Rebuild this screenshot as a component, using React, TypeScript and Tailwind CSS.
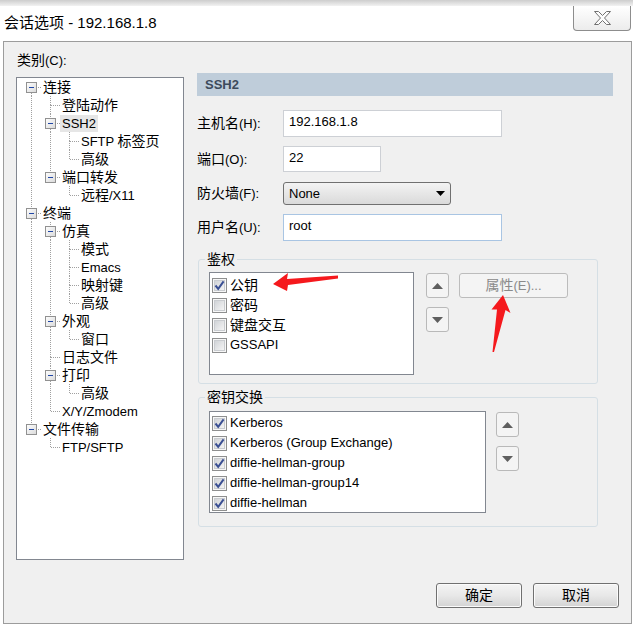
import React from "react"

type Node = { t: string; c?: Node[]; sel?: boolean }

const tree: Node[] = [
  {
    t: "连接",
    c: [
      { t: "登陆动作" },
      { t: "SSH2", sel: true, c: [{ t: "SFTP 标签页" }, { t: "高级" }] },
      { t: "端口转发", c: [{ t: "远程/X11" }] },
    ],
  },
  {
    t: "终端",
    c: [
      { t: "仿真", c: [{ t: "模式" }, { t: "Emacs" }, { t: "映射键" }, { t: "高级" }] },
      { t: "外观", c: [{ t: "窗口" }] },
      { t: "日志文件" },
      { t: "打印", c: [{ t: "高级" }] },
      { t: "X/Y/Zmodem" },
    ],
  },
  { t: "文件传输", c: [{ t: "FTP/SFTP" }] },
]

type Row = { t: string; level: number; guides: boolean[]; last: boolean; first: boolean; kids: boolean; sel?: boolean }

function flatten(nodes: Node[], level = 0, guides: boolean[] = [], out: Row[] = []) {
  nodes.forEach((n, i) => {
    const last = i === nodes.length - 1
    out.push({ t: n.t, level, guides, last, first: level === 0 && i === 0, kids: !!n.c, sel: n.sel })
    if (n.c) flatten(n.c, level + 1, [...guides, !last], out)
  })
  return out
}

const cjk = /([\u3000-\u9fff\uff00-\uffef]+)/

function Mixed({ s, big = "text-[14px]" }: { s: string; big?: string }) {
  return (
    <>
      {s.split(cjk).map((p, i) =>
        cjk.test(p) ? (
          <span key={i} className={big}>
            {p}
          </span>
        ) : (
          p
        )
      )}
    </>
  )
}

const dot = { stroke: "#a0a0a0", strokeDasharray: "1 1", strokeWidth: 1 }

function Guide({ on }: { on: boolean }) {
  return (
    <svg width="19" height="18" className="shrink-0">
      {on && <line x1="9.5" y1="0" x2="9.5" y2="18" {...dot} />}
    </svg>
  )
}

function Joint({ top, bottom, box }: { top: boolean; bottom: boolean; box: boolean }) {
  return (
    <svg width="19" height="18" className="shrink-0">
      <defs>
        <linearGradient id="expbg" x1="0" y1="0" x2="1" y2="1">
          <stop offset="0" stopColor="#ffffff" />
          <stop offset="1" stopColor="#d9d9d9" />
        </linearGradient>
      </defs>
      {top && <line x1="9.5" y1="0" x2="9.5" y2="9" {...dot} />}
      {bottom && <line x1="9.5" y1="9" x2="9.5" y2="18" {...dot} />}
      <line x1="10" y1="9.5" x2="19" y2="9.5" {...dot} />
      {box && (
        <>
          <rect x="4.5" y="4.5" width="10" height="10" fill="url(#expbg)" stroke="#919191" />
          <line x1="7" y1="9.5" x2="12" y2="9.5" stroke="#2147a6" strokeWidth="1" />
        </>
      )}
    </svg>
  )
}

function Tree() {
  const rows = flatten(tree)
  return (
    <div className="mt-[8px] w-[168px] h-[483px] border border-[#828790] bg-white pl-[5px]">
      {rows.map((r, i) => (
        <div key={i} className="flex items-center h-[18px]">
          {r.guides.map((g, k) => (
            <Guide key={k} on={g} />
          ))}
          <Joint top={!r.first} bottom={!r.last} box={r.kids} />
          <span
            className={
              "px-[2px] leading-[17px] whitespace-nowrap text-[13px] text-black " + (r.sel ? "bg-[#e6e6e6]" : "")
            }
          >
            <Mixed s={r.t} />
          </span>
        </div>
      ))}
    </div>
  )
}

function Check({ on }: { on: boolean }) {
  return (
    <svg width="15" height="15" className="shrink-0">
      <defs>
        <linearGradient id="cbfill" x1="0" y1="0" x2="1" y2="1">
          <stop offset="0" stopColor="#cfd2d6" />
          <stop offset="1" stopColor="#f6f6f6" />
        </linearGradient>
      </defs>
      <rect x="0.5" y="0.5" width="14" height="14" fill="#f7f7f7" stroke="#8e8f8f" />
      <rect x="2.5" y="2.5" width="10" height="10" fill="url(#cbfill)" stroke="#c9ccd0" />
      {on && (
        <path d="M3.5 7.5 L6.2 10.8 L11.6 3.4" fill="none" stroke="#3a4f93" strokeWidth="2" />
      )}
    </svg>
  )
}

function Item({ on, s }: { on: boolean; s: string }) {
  return (
    <div className="flex items-center h-[20px] gap-[3px] text-[13px] text-black whitespace-nowrap">
      <Check on={on} />
      <span>
        <Mixed s={s} />
      </span>
    </div>
  )
}

function Tri({ up }: { up?: boolean }) {
  return (
    <svg width="11" height="6">
      <path d={up ? "M0 6 L5.5 0 L11 6 Z" : "M0 0 L5.5 6 L11 0 Z"} fill="#5f5f5f" />
    </svg>
  )
}

function Arrows() {
  return (
    <div className="mt-[1px] flex flex-col gap-[9px]">
      <div className="flex items-center justify-center w-[23px] h-[25px] rounded-[3px] border border-[#b9b9b9] bg-[#f4f4f4]">
        <Tri up />
      </div>
      <div className="flex items-center justify-center w-[23px] h-[25px] rounded-[3px] border border-[#b9b9b9] bg-[#f4f4f4]">
        <Tri />
      </div>
    </div>
  )
}

function Label({ s }: { s: string }) {
  return (
    <div className="w-[86px] text-[13px] text-black whitespace-nowrap">
      <Mixed s={s} />
    </div>
  )
}

function Btn({ s }: { s: string }) {
  return (
    <div className="flex items-center justify-center w-[86px] h-[25px] rounded-[3px] border border-[#707070] bg-linear-to-b from-[#f4f4f4] via-[#e8e8e8] to-[#d3d3d3] shadow-[inset_0_0_0_1px_#fbfbfb] text-[14px] text-black">
      {s}
    </div>
  )
}

export default function App() {
  return (
    <div className="relative w-[633px] h-[630px] overflow-hidden bg-white font-['Liberation_Sans','Noto_Sans_CJK_SC',sans-serif]">
      <div className="h-[6px] bg-linear-to-b from-[#cdcdcd] to-[#f2f2f2]" />
      <div className="flex h-[35px]">
        <div className="self-center pl-[4px] pb-[1px] text-[15px] text-black">
          <Mixed s="会话选项 - 192.168.1.8" big="text-[15px]" />
        </div>
        <div className="ml-auto mr-[2px] flex items-center justify-center w-[58px] h-[25px] border border-t-0 border-[#8d8d8d] rounded-b-[4px] bg-linear-to-b from-white to-[#ececec]">
          <svg width="17" height="14">
            <polygon
              points="0.5,0.5 4.5,0.5 8.5,4.5 12.5,0.5 16.5,0.5 10.5,7 16.5,13.5 12.5,13.5 8.5,9.5 4.5,13.5 0.5,13.5 6.5,7"
              fill="#fdfdfd"
              stroke="#707070"
            />
          </svg>
        </div>
      </div>

      <div className="ml-[3px] w-[629px] h-[583px] border border-[#9c9c9c] bg-[#f0f0f0] pt-[9px] pl-[12px]">
        <div className="flex items-start">
          <div className="flex flex-col">
            <div className="h-[18px] pl-[1px] text-[13px] text-black leading-[18px]">
              <Mixed s="类别(C):" />
            </div>
            <Tree />
          </div>

          <div className="ml-[13px] mt-[22px] w-[416px] flex flex-col">
            <div className="h-[23px] bg-[#bfcdda] pl-[8px] flex items-center text-[13px] font-bold text-[#3d4b5c]">
              SSH2
            </div>

            <div className="mt-[14px] flex items-center">
              <Label s="主机名(H):" />
              <div className="w-[219px] h-[27px] border border-[#cdd0d5] bg-white pl-[5px] pb-[3px] flex items-center text-[13px] text-black">
                192.168.1.8
              </div>
            </div>
            <div className="mt-[9px] flex items-center">
              <Label s="端口(O):" />
              <div className="w-[98px] h-[26px] border border-[#cdd0d5] bg-white pl-[5px] pb-[3px] flex items-center text-[13px] text-black">
                22
              </div>
            </div>
            <div className="mt-[10px] flex items-center">
              <Label s="防火墙(F):" />
              <div className="w-[168px] h-[23px] rounded-[3px] border border-[#707070] bg-linear-to-b from-[#f3f3f3] to-[#dadada] pl-[5px] pr-[5px] flex items-center text-[13px] text-black">
                None
                <svg width="9" height="5" className="ml-auto">
                  <path d="M0 0 L9 0 L4.5 5 Z" fill="#000" />
                </svg>
              </div>
            </div>
            <div className="mt-[9px] flex items-center">
              <Label s="用户名(U):" />
              <div className="w-[219px] h-[27px] border border-[#a9c5e3] bg-white pl-[5px] pb-[3px] flex items-center text-[13px] text-black">
                root
              </div>
            </div>

            <fieldset className="ml-[1px] mt-[8px] w-[400px] border border-[#d5dfe5] rounded-[3px] px-[10px] pt-[3px] pb-[8px]">
              <legend className="ml-[-4px] px-[2px] text-[14px] leading-[20px] text-black">鉴权</legend>
              <div className="flex items-start">
                <div className="w-[205px] h-[103px] border border-[#828790] bg-white pl-[2px] pt-[2px]">
                  <Item on s="公钥" />
                  <Item on={false} s="密码" />
                  <Item on={false} s="键盘交互" />
                  <Item on={false} s="GSSAPI" />
                </div>
                <div className="ml-[12px]">
                  <Arrows />
                </div>
                <div className="ml-[10px] mt-[1px] flex items-center justify-center w-[109px] h-[25px] rounded-[3px] border border-[#bcbcbc] bg-[#f4f4f4] text-[13px] text-[#8a8a8a]">
                  <Mixed s="属性(E)..." />
                </div>
              </div>
            </fieldset>

            <fieldset className="ml-[1px] mt-[3px] w-[400px] border border-[#d5dfe5] rounded-[3px] px-[10px] pt-[4px] pb-[13px]">
              <legend className="ml-[-4px] px-[2px] text-[14px] leading-[20px] text-black">密钥交换</legend>
              <div className="flex items-start">
                <div className="w-[277px] h-[102px] border border-[#828790] bg-white pl-[2px] pt-[1px]">
                  <Item on s="Kerberos" />
                  <Item on s="Kerberos (Group Exchange)" />
                  <Item on s="diffie-hellman-group" />
                  <Item on s="diffie-hellman-group14" />
                  <Item on s="diffie-hellman" />
                </div>
                <div className="ml-[10px]">
                  <Arrows />
                </div>
              </div>
            </fieldset>
          </div>
        </div>

        <div className="mt-[23px] flex gap-[11px] pl-[420px]">
          <Btn s="确定" />
          <Btn s="取消" />
        </div>
      </div>

      <svg width="633" height="630" className="absolute inset-0 pointer-events-none">
        <polygon points="273,284 288,273 287,279 338,275.5 338,278.5 288,285 287,291" fill="#f5191d" />
        <polygon points="503,295 510.5,313 505.5,310 494,352 492.5,352 497,309.5 491.5,309.5" fill="#f5191d" />
      </svg>
    </div>
  )
}
